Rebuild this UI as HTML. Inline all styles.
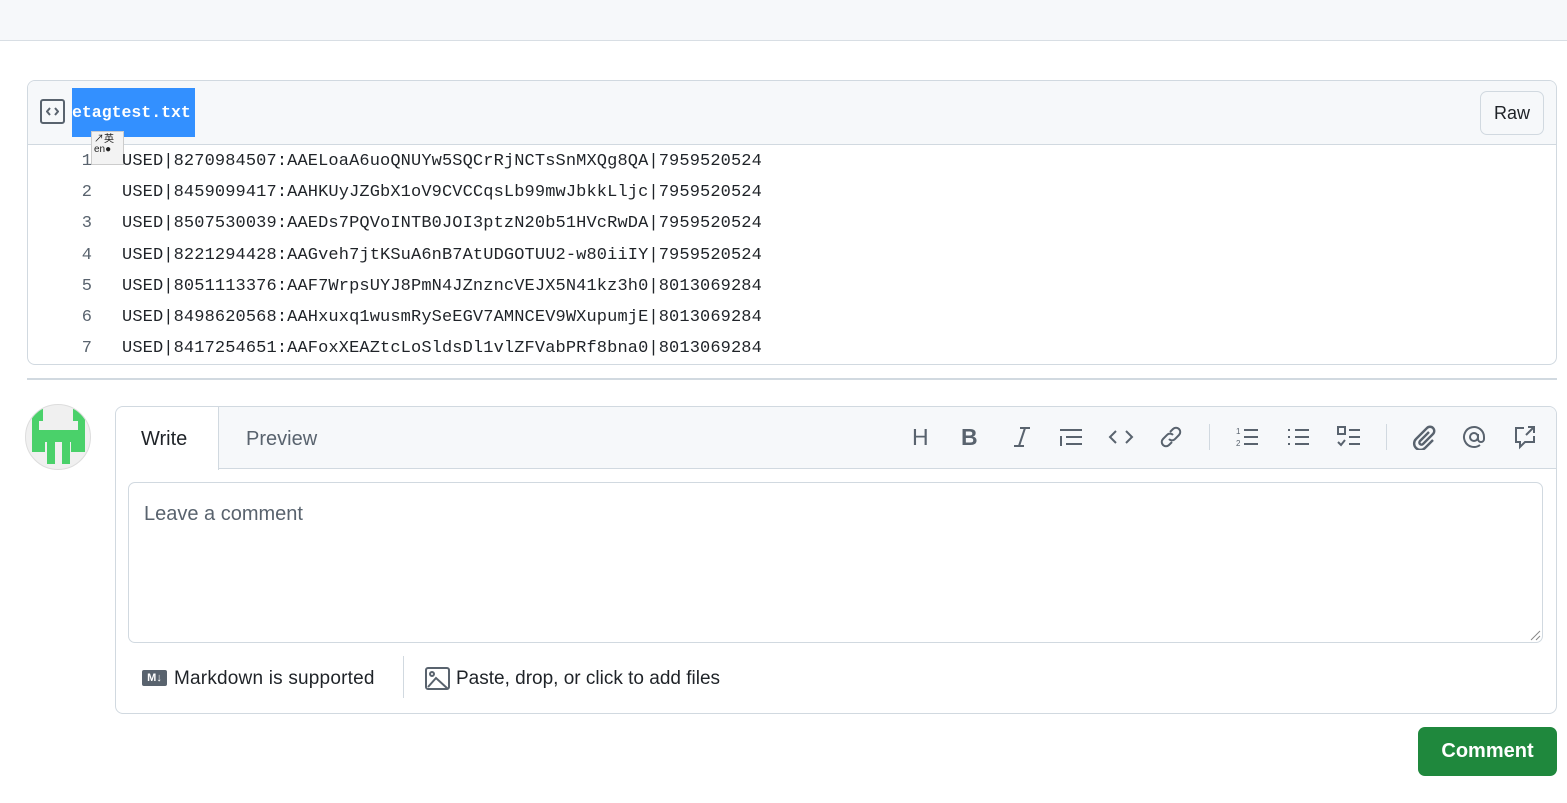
<!DOCTYPE html>
<html><head><meta charset="utf-8"><style>
*{box-sizing:border-box;margin:0;padding:0}
body{width:1567px;height:803px;background:#fff;position:relative;overflow:hidden;font-family:"Liberation Sans",sans-serif;color:#1f2328}
.a{position:absolute}
.mono{font-family:"Liberation Mono",monospace}
.ln{position:absolute;left:60px;width:32px;text-align:right;font-size:17px;color:#59636e}
.code{position:absolute;left:122px;font-size:17px;letter-spacing:0.12px;color:#1f2328;white-space:pre}
svg{display:block}
.ic{position:absolute;top:424px}
</style></head><body>
<div class="a" style="left:0;top:0;width:1567px;height:41px;background:#f6f8fa;border-bottom:1px solid #d8dee4"></div>

<div class="a" style="left:27px;top:80px;width:1530px;height:285px;border:1px solid #d1d9e0;border-radius:8px;overflow:hidden">
  <div class="a" style="left:0;top:0;width:1530px;height:64px;background:#f6f8fa;border-bottom:1px solid #d1d9e0"></div>
</div>
<div class="a" style="left:40px;top:99px;width:25px;height:25px;border:2px solid #59636e;border-radius:3px"></div>
<svg class="a" style="left:46px;top:106px" width="13" height="11" viewBox="0 0 13 11" stroke="#59636e" stroke-width="2" fill="none"><path d="M4 2L1 5.5 4 9M9 2l3 3.5L9 9"/></svg>
<div class="a mono" style="left:72px;top:88px;width:123px;height:49px;background:#3390ff;color:#fff;font-size:16.5px;font-weight:bold;line-height:49px;padding-left:0;white-space:nowrap;overflow:hidden">etagtest.txt</div>
<div class="a" style="left:91px;top:131px;width:33px;height:34px;background:#f3f3f3;border:1px solid #ccc;font-size:10px;line-height:10px;padding:3px 2px;color:#222">&#x2197;英<br>en&#x25cf;</div>
<div class="a" style="left:1480px;top:91px;width:64px;height:44px;border:1px solid #d1d9e0;border-radius:7px;background:#f6f8fa;font-size:18px;text-align:center;line-height:42px">Raw</div>

<div class="mono">
<div class="ln" style="top:152px">1</div><div class="code" style="top:152px">USED|8270984507:AAELoaA6uoQNUYw5SQCrRjNCTsSnMXQg8QA|7959520524</div>
<div class="ln" style="top:183px">2</div><div class="code" style="top:183px">USED|8459099417:AAHKUyJZGbX1oV9CVCCqsLb99mwJbkkLljc|7959520524</div>
<div class="ln" style="top:214px">3</div><div class="code" style="top:214px">USED|8507530039:AAEDs7PQVoINTB0JOI3ptzN20b51HVcRwDA|7959520524</div>
<div class="ln" style="top:246px">4</div><div class="code" style="top:246px">USED|8221294428:AAGveh7jtKSuA6nB7AtUDGOTUU2-w80iiIY|7959520524</div>
<div class="ln" style="top:277px">5</div><div class="code" style="top:277px">USED|8051113376:AAF7WrpsUYJ8PmN4JZnzncVEJX5N41kz3h0|8013069284</div>
<div class="ln" style="top:308px">6</div><div class="code" style="top:308px">USED|8498620568:AAHxuxq1wusmRySeEGV7AMNCEV9WXupumjE|8013069284</div>
<div class="ln" style="top:339px">7</div><div class="code" style="top:339px">USED|8417254651:AAFoxXEAZtcLoSldsDl1vlZFVabPRf8bna0|8013069284</div>
</div>

<div class="a" style="left:27px;top:378px;width:1530px;height:2px;background:#d1d9e0"></div>

<svg class="a" style="left:25px;top:404px" width="66" height="66" viewBox="0 0 66 66">
<defs><clipPath id="c"><circle cx="33" cy="33" r="32"/></clipPath></defs>
<circle cx="33" cy="33" r="32.5" fill="#f0f0f0" stroke="#ddd"/>
<g fill="#4ad16a" clip-path="url(#c)">
<rect x="7" y="5" width="11" height="12"/><rect x="48" y="5" width="12" height="12"/>
<rect x="7" y="17" width="7" height="10"/><rect x="53" y="17" width="7" height="10"/>
<rect x="7" y="26" width="53" height="12"/>
<rect x="7" y="38" width="13" height="10"/><rect x="46" y="38" width="14" height="10"/>
<rect x="22" y="38" width="8" height="22"/><rect x="37" y="38" width="8" height="22"/>
</g></svg>

<div class="a" style="left:115px;top:406px;width:1442px;height:308px;border:1px solid #d1d9e0;border-radius:8px;overflow:hidden">
  <div class="a" style="left:0;top:0;width:1442px;height:62px;background:#f6f8fa;border-bottom:1px solid #d1d9e0"></div>
  <div class="a" style="left:0;top:0;width:103px;height:63px;background:#fff;border-right:1px solid #d1d9e0;border-top-left-radius:8px"></div>
</div>
<div class="a" style="left:141px;top:428px;font-size:20px">Write</div>
<div class="a" style="left:246px;top:428px;font-size:20px;color:#59636e">Preview</div>

<div class="a" style="left:912px;top:424px;font-size:23px;color:#59636e">H</div>
<div class="a" style="left:961px;top:424px;font-size:23px;font-weight:bold;color:#59636e">B</div>
<svg class="ic" style="left:1010px" width="24" height="26" viewBox="0 0 24 26" stroke="#59636e" stroke-width="2" fill="none"><path d="M10 4h10M4 22h10M15 4L9 22"/></svg>
<svg class="ic" style="left:1058px" width="26" height="26" viewBox="0 0 26 26" stroke="#59636e" stroke-width="2" fill="none"><path d="M2 6h22M8 13h16M8 20h16M3 12v10"/></svg>
<svg class="ic" style="left:1108px" width="26" height="26" viewBox="0 0 26 26" stroke="#59636e" stroke-width="2" fill="none"><path d="M8 7l-6 6 6 6M18 7l6 6-6 6"/></svg>
<svg class="ic" style="left:1158px" width="26" height="26" viewBox="0 0 26 26" stroke="#59636e" stroke-width="2" fill="none"><path d="M12 8l3-3a4 4 0 016 6l-4 4a4 4 0 01-6 0M14 18l-3 3a4 4 0 01-6-6l4-4a4 4 0 016 0"/></svg>
<div class="a" style="left:1209px;top:424px;width:1px;height:26px;background:#d1d9e0"></div>
<svg class="ic" style="left:1234px" width="26" height="26" viewBox="0 0 26 26" stroke="#59636e" stroke-width="2" fill="none"><path d="M10 6h14M10 13h14M10 20h14"/><text x="2" y="10" font-size="8" fill="#59636e" stroke="none">1</text><text x="2" y="22" font-size="8" fill="#59636e" stroke="none">2</text></svg>
<svg class="ic" style="left:1285px" width="26" height="26" viewBox="0 0 26 26" stroke="#59636e" stroke-width="2" fill="none"><path d="M10 6h14M10 13h14M10 20h14M3 6h2M3 13h2M3 20h2"/></svg>
<svg class="ic" style="left:1336px" width="26" height="26" viewBox="0 0 26 26" stroke="#59636e" stroke-width="2" fill="none"><rect x="2" y="3" width="7" height="7"/><path d="M13 6h11M13 13h11M13 20h11M2 18l3 3 4-5"/></svg>
<div class="a" style="left:1386px;top:424px;width:1px;height:26px;background:#d1d9e0"></div>
<svg class="ic" style="left:1411px" width="26" height="26" viewBox="0 0 26 26" stroke="#59636e" stroke-width="2.4" fill="none"><path d="M18 8l-9 9a2 2 0 003 3l10-10a4 4 0 00-6-6L5 15a6 6 0 009 9l8-8"/></svg>
<svg class="ic" style="left:1461px" width="26" height="26" viewBox="0 0 26 26" stroke="#59636e" stroke-width="2" fill="none"><circle cx="13" cy="13" r="4"/><path d="M17 10v5a3 3 0 006 0v-2a10 10 0 10-4 8"/></svg>
<svg class="ic" style="left:1512px" width="26" height="26" viewBox="0 0 26 26" stroke="#59636e" stroke-width="2" fill="none"><path d="M12 4H4v14h4v5l5-5h9v-6M16 3h6v6M22 3l-8 8"/></svg>

<div class="a" style="left:128px;top:482px;width:1415px;height:161px;border:1px solid #d1d9e0;border-radius:7px"></div>
<div class="a" style="left:144px;top:503px;font-size:20px;color:#59636e">Leave a comment</div>
<svg class="a" style="left:1529px;top:629px" width="12" height="12"><path d="M11 2L2 11M11 7L7 11" stroke="#888" stroke-width="1"/></svg>

<div class="a" style="left:142px;top:670px;width:25px;height:16px;background:#59636e;border-radius:2px;color:#fff;font-size:11px;font-weight:bold;text-align:center;line-height:16px">M↓</div>
<div class="a" style="left:174px;top:668px;font-size:19px;letter-spacing:0.2px">Markdown is supported</div>
<div class="a" style="left:403px;top:656px;width:1px;height:42px;background:#d1d9e0"></div>
<svg class="a" style="left:425px;top:667px" width="26" height="24" viewBox="0 0 26 24" stroke="#59636e" stroke-width="2" fill="none"><rect x="1" y="1" width="23" height="21" rx="2"/><circle cx="7" cy="7" r="2"/><path d="M3 20l8-9 12 11"/></svg>
<div class="a" style="left:456px;top:668px;font-size:19px">Paste, drop, or click to add files</div>

<div class="a" style="left:1418px;top:727px;width:139px;height:49px;background:#1f883d;border-radius:7px;color:#fff;font-size:20px;font-weight:bold;text-align:center;line-height:49px">Comment</div>
</body></html>
